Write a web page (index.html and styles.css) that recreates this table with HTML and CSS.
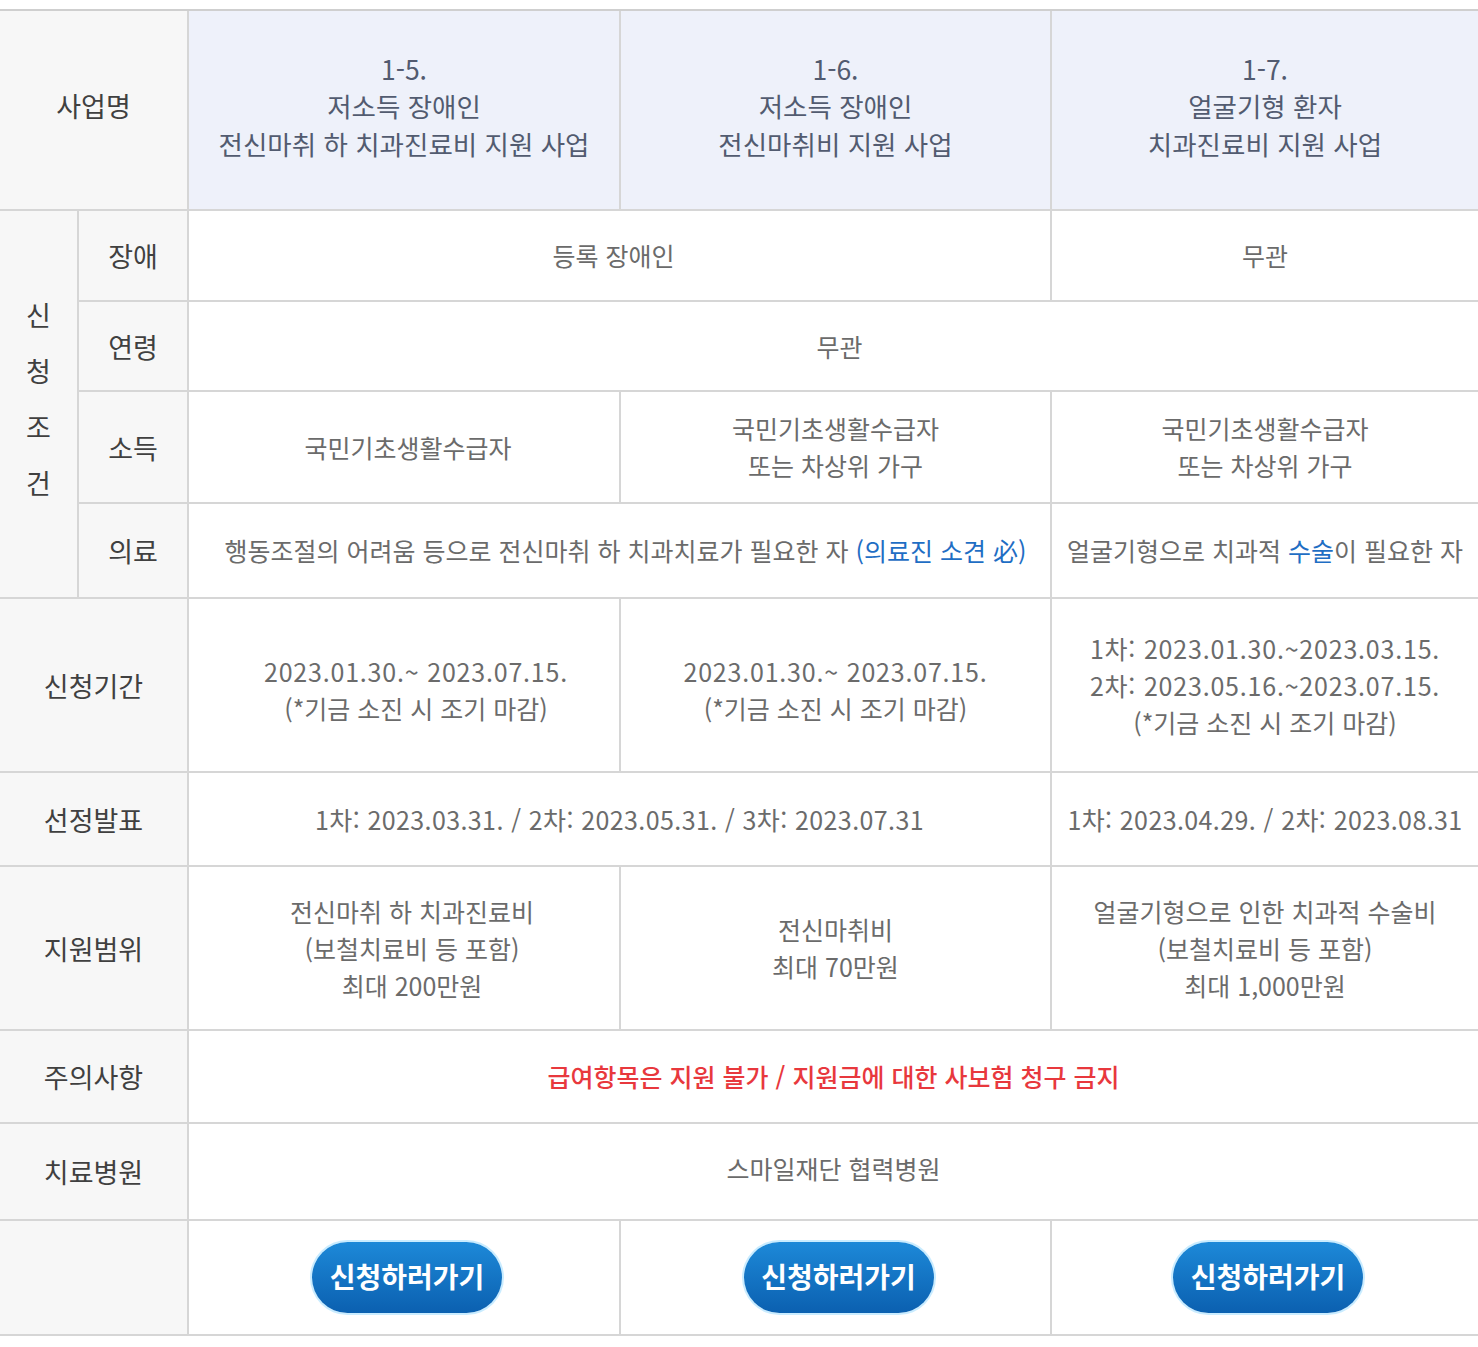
FILE: index.html
```html
<!DOCTYPE html>
<html lang="ko">
<head>
<meta charset="utf-8">
<title>지원 사업 안내</title>
<link rel="stylesheet" href="styles.css">
</head>
<body>
<div class="board">
  <div class="lab span2 top"><p>사업명</p></div>
  <div class="hd"><p>1-5.<br>저소득 장애인<br>전신마취 하 치과진료비 지원 사업</p></div>
  <div class="hd"><p>1-6.<br>저소득 장애인<br>전신마취비 지원 사업</p></div>
  <div class="hd"><p>1-7.<br>얼굴기형 환자<br>치과진료비 지원 사업</p></div>

  <div class="lab group"><p>신<br>청<br>조<br>건</p></div>
  <div class="lab"><p>장애</p></div>
  <div class="cell span2 nudge-left"><p>등록 장애인</p></div>
  <div class="cell"><p>무관</p></div>

  <div class="lab"><p>연령</p></div>
  <div class="cell span3 nudge-right"><p>무관</p></div>

  <div class="lab"><p>소득</p></div>
  <div class="cell nudge-right-sm"><p>국민기초생활수급자</p></div>
  <div class="cell"><p>국민기초생활수급자<br>또는 차상위 가구</p></div>
  <div class="cell"><p>국민기초생활수급자<br>또는 차상위 가구</p></div>

  <div class="lab"><p>의료</p></div>
  <div class="cell span2 nudge-right"><p>행동조절의 어려움 등으로 전신마취 하 치과치료가 필요한 자 <span class="blue">(의료진 소견 必)</span></p></div>
  <div class="cell"><p>얼굴기형으로 치과적 <span class="blue">수술</span>이 필요한 자</p></div>

  <div class="lab span2"><p>신청기간</p></div>
  <div class="cell period nudge-right-lg"><p><span class="num">2023.01.30.~ 2023.07.15.</span><br>(*기금 소진 시 조기 마감)</p></div>
  <div class="cell period"><p><span class="num">2023.01.30.~ 2023.07.15.</span><br>(*기금 소진 시 조기 마감)</p></div>
  <div class="cell"><p><span class="num">1차: 2023.01.30.~2023.03.15.</span><br><span class="num">2차: 2023.05.16.~2023.07.15.</span><br>(*기금 소진 시 조기 마감)</p></div>

  <div class="lab span2"><p>선정발표</p></div>
  <div class="cell span2"><p class="num2">1차: 2023.03.31. / 2차: 2023.05.31. / 3차: 2023.07.31</p></div>
  <div class="cell"><p class="num2">1차: 2023.04.29. / 2차: 2023.08.31</p></div>

  <div class="lab span2"><p>지원범위</p></div>
  <div class="cell nudge-right-md"><p>전신마취 하 치과진료비<br>(보철치료비 등 포함)<br>최대 200만원</p></div>
  <div class="cell"><p>전신마취비<br>최대 70만원</p></div>
  <div class="cell"><p>얼굴기형으로 인한 치과적 수술비<br>(보철치료비 등 포함)<br>최대 1,000만원</p></div>

  <div class="lab span2"><p>주의사항</p></div>
  <div class="cell span3 warn"><p>급여항목은 지원 불가 / 지원금에 대한 사보험 청구 금지</p></div>

  <div class="lab span2"><p>치료병원</p></div>
  <div class="cell span3 raise"><p>스마일재단 협력병원</p></div>

  <div class="lab span2"></div>
  <div class="cell"><a class="btn" href="#">신청하러가기</a></div>
  <div class="cell"><a class="btn" href="#">신청하러가기</a></div>
  <div class="cell"><a class="btn" href="#">신청하러가기</a></div>
</div>
</body>
</html>
```

FILE: styles.css
```css
html, body {
  margin: 0;
  padding: 0;
  background: #ffffff;
}

body {
  font-family: "Noto Sans CJK KR", "Noto Sans", sans-serif;
}

.board {
  margin-top: 9px;
  display: grid;
  grid-template-columns: 77px 108px 430px 429px minmax(0, 1fr);
  grid-template-rows: 198px 89px 88px 110px 93px 172px 92px 162px 91px 95px 113px;
  gap: 2px;
  background: #d6d6d6;
  border-top: 2px solid #cfcfcf;
  border-bottom: 2px solid #d6d6d6;
}

.board > div {
  display: flex;
  align-items: center;
  justify-content: center;
  text-align: center;
  box-sizing: border-box;
  min-width: 0;
}

.board p {
  margin: 0;
  white-space: nowrap;
}

.span2 { grid-column: span 2; }
.span3 { grid-column: span 3; }

.lab {
  background: #f7f7f7;
  color: #404040;
  font-size: 27px;
  line-height: 37px;
}

.lab.top {
  padding-bottom: 10px;
}

.group {
  grid-row: span 4;
  line-height: 56px;
  padding-bottom: 10px;
}

.hd {
  background: #eef1fa;
  color: #525b70;
  font-size: 26.5px;
  line-height: 37.5px;
  padding-bottom: 8px;
}

.cell {
  background: #ffffff;
  color: #6b6b6b;
  font-size: 25px;
  line-height: 37px;
}

.nudge-left { padding-right: 12px; }
.nudge-right { padding-left: 12px; }
.nudge-right-sm { padding-left: 8px; }
.nudge-right-md { padding-left: 16px; }
.nudge-right-lg { padding-left: 24px; }
.period { padding-top: 10px; }
.raise { padding-bottom: 6px; }

.num {
  letter-spacing: 0.8px;
}

.num2 {
  letter-spacing: 0.4px;
}

.blue {
  color: #1f6ec4;
}

.warn {
  color: #e8383d;
  font-weight: 500;
}

.btn {
  display: inline-flex;
  align-items: center;
  justify-content: center;
  width: 190px;
  height: 71px;
  box-sizing: border-box;
  border-radius: 36px;
  background: linear-gradient(#1d89d8, #0b60b0);
  box-shadow: 0 0 0 2px #c9ecff;
  color: #ffffff;
  font-size: 28px;
  font-weight: 700;
  text-decoration: none;
  margin-left: 6px;
  padding-bottom: 3px;
}
```
